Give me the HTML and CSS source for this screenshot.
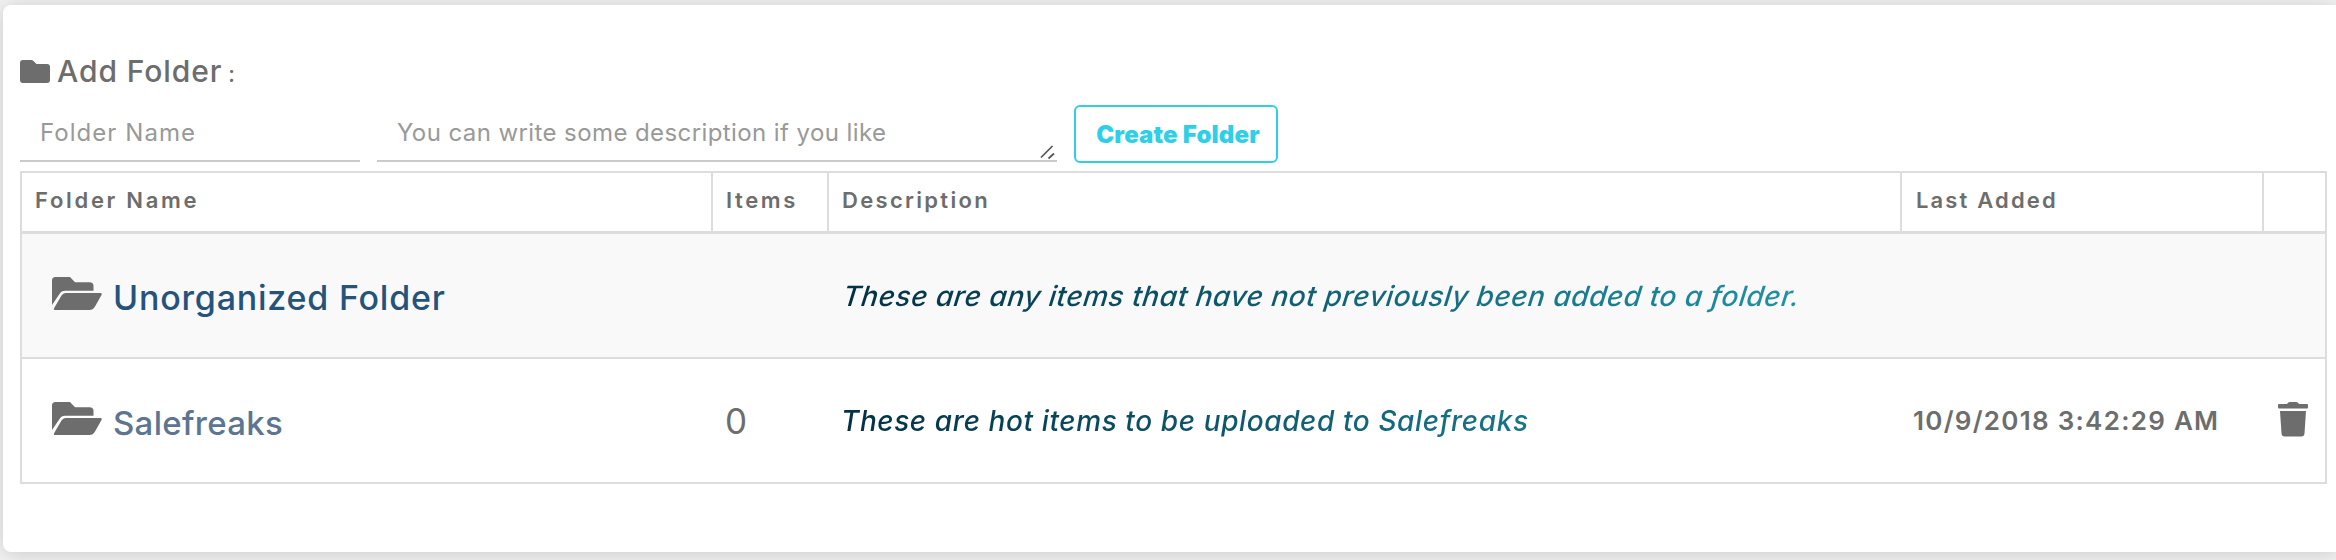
FILE: index.html
```html
<!DOCTYPE html>
<html lang="en">
<head>
<meta charset="utf-8">
<title>Folders</title>
<link rel="stylesheet" href="styles.css">
</head>
<body>
<svg class="defs" width="0" height="0" aria-hidden="true">
  <symbol id="folder-open" viewBox="0 0 50 33">
    <path d="M0 3.500Q0 0 3.500 0H18L23 5.300H37.500Q41.500 5.300 41.500 9V13.800H13Q9.500 13.800 7.500 17L0 28Z"/>
    <path d="M13.500 16H48.500Q50.300 16 49.500 18L43 29.500Q41 33 37.500 33H3Q1 33 2.200 31L9.500 18.500Q11 16 13.500 16Z"/>
  </symbol>
</svg>
<main class="card">
  <h2 class="title">
    <svg class="title-icon" viewBox="0 0 30 23"><path d="M0 3Q0 0 3 0H11Q12.500 0 13.500 1L16.500 4H27Q30 4 30 7V20Q30 23 27 23H3Q0 23 0 20Z"/></svg>
    <span class="title-text">Add Folder</span><span class="colon">:</span>
  </h2>
  <form class="form">
    <div class="field name">Folder Name</div>
    <div class="field about">You can write some description if you like
      <svg class="grip" viewBox="0 0 16 16"><path d="M2 13.500L13.500 2M9.500 14.500L15 9.500"/></svg>
    </div>
    <button class="create" type="button">Create Folder</button>
  </form>
  <div class="table">
    <div class="row head">
      <div class="th h-name">Folder Name</div>
      <div class="th h-items">Items</div>
      <div class="th h-desc">Description</div>
      <div class="th h-last">Last Added</div>
      <div class="th"></div>
    </div>
    <div class="row striped">
      <div class="cell folder"><svg class="open-icon"><use href="#folder-open"/></svg><span class="unorganized">Unorganized Folder</span></div>
      <div class="cell"></div>
      <div class="cell"><em class="desc slanted">These are any items that have not previously been added to a folder.</em></div>
      <div class="cell"></div>
      <div class="cell"></div>
    </div>
    <div class="row">
      <div class="cell folder"><svg class="open-icon"><use href="#folder-open"/></svg><span class="sale">Salefreaks</span></div>
      <div class="cell count">0</div>
      <div class="cell"><em class="desc">These are hot items to be uploaded to Salefreaks</em></div>
      <div class="cell date">10/9/2018 3:42:29 AM</div>
      <div class="cell trash"><svg viewBox="0 0 30 35"><path d="M1 2H9Q10 0 12 0H18Q20 0 21 2H29Q30 2 30 3V5.500Q30 6.500 29 6.500H1Q0 6.500 0 5.500V3Q0 2 1 2ZM2 9H28L26.500 31.500Q26.200 34.500 23.500 34.500H6.500Q3.800 34.500 3.500 31.500Z"/></svg></div>
    </div>
  </div>
</main>
</body>
</html>
```
FILE: styles.css
```css
* { box-sizing: border-box; }
body {
  margin: 0;
  height: 560px;
  overflow: hidden;
  padding: 5px 0 8px 3px;
  background: #f2f2f2;
  color: #6d6d6d;
  font-family: Inter, sans-serif;
}
svg { display: block; flex: none; fill: #6d6d6d; }
.defs { position: absolute; }
.card {
  height: 547px;
  padding: 42px 9px 0 17px;
  background: #fff;
  border-radius: 8px 0 0 8px;
  box-shadow: 0 2px 20px rgba(0, 0, 0, .17);
}
.title {
  display: flex;
  align-items: center;
  height: 48px;
  margin: 0;
  font-size: 30px;
  font-weight: 500;
}
.title-icon { width: 30px; height: 23px; margin-right: 7px; }
.title-text { letter-spacing: .9px; }
.colon { margin-left: 6px; font-size: 22px; padding-top: 5px; }
.form { display: flex; height: 76px; padding-top: 10px; }
.field {
  height: 57px;
  border-bottom: 2px solid #cbcbcb;
  color: #999;
  font-size: 24px;
  line-height: 56px;
  white-space: nowrap;
}
.name { width: 340px; padding-left: 20px; letter-spacing: 1.05px; }
.about {
  display: flex;
  justify-content: space-between;
  width: 680px;
  margin-left: 17px;
  padding-left: 20px;
  letter-spacing: .41px;
}
.grip {
  width: 16px;
  height: 16px;
  margin: 39px 2px 0 0;
  fill: none;
  stroke: #555;
  stroke-width: 1.7;
}
.create {
  width: 204px;
  height: 58px;
  margin-left: 17px;
  padding: 0 0 0 4px;
  background: #fff;
  border: 2px solid #30cfe8;
  border-radius: 6px;
  color: #30cfe8;
  font: 900 24px Inter, sans-serif;
  letter-spacing: .15px;
  white-space: nowrap;
}
.table { width: 2307px; border: 2px solid #ddd; border-top: 0; }
.row {
  display: grid;
  grid-template-columns: 691px 116px 1073px 362px 61px;
  height: 125px;
}
.row + .row { border-top: 2px solid #ddd; }
.head { height: 60px; border-top: 2px solid #ddd; }
.row.striped { height: 126px; background: #f9f9f9; border-top-width: 3px; }
.th {
  padding-left: 13px;
  border-right: 2px solid #ddd;
  font-size: 22px;
  font-weight: 600;
  line-height: 54px;
}
.th:last-child { border-right: 0; }
.h-name { letter-spacing: 2.7px; }
.h-items { letter-spacing: 2.6px; }
.h-desc { letter-spacing: 2.3px; }
.h-last { letter-spacing: 2.15px; padding-left: 14px; }
.cell { display: flex; align-items: center; white-space: nowrap; }
.folder { padding-left: 30px; font-size: 33px; font-weight: 500; }
.open-icon { width: 50px; height: 33px; margin: 0 11px 5px 0; }
.folder span { padding-top: 4px; }
.unorganized { color: #25537b; font-size: 34px; letter-spacing: .78px; }
.sale { color: #5c7590; letter-spacing: .3px; }
.count { padding-left: 12px; font-size: 35px; }
.desc {
  width: 1056px;
  padding: 0 0 0 12px;
  background: linear-gradient(90deg, #022f44, #239aad);
  -webkit-background-clip: text;
  background-clip: text;
  color: transparent;
  font-size: 28px;
  font-weight: 500;
  letter-spacing: .6px;
}
.slanted {
  padding: 1px 0 0 14px;
  letter-spacing: .54px;
  transform: skewX(-8deg);
}
.date { padding-left: 11px; font-size: 26px; font-weight: 600; letter-spacing: 1.27px; }
.trash { padding-left: 14px; }
.trash svg { width: 30px; height: 35px; margin-bottom: 2px; }
```
